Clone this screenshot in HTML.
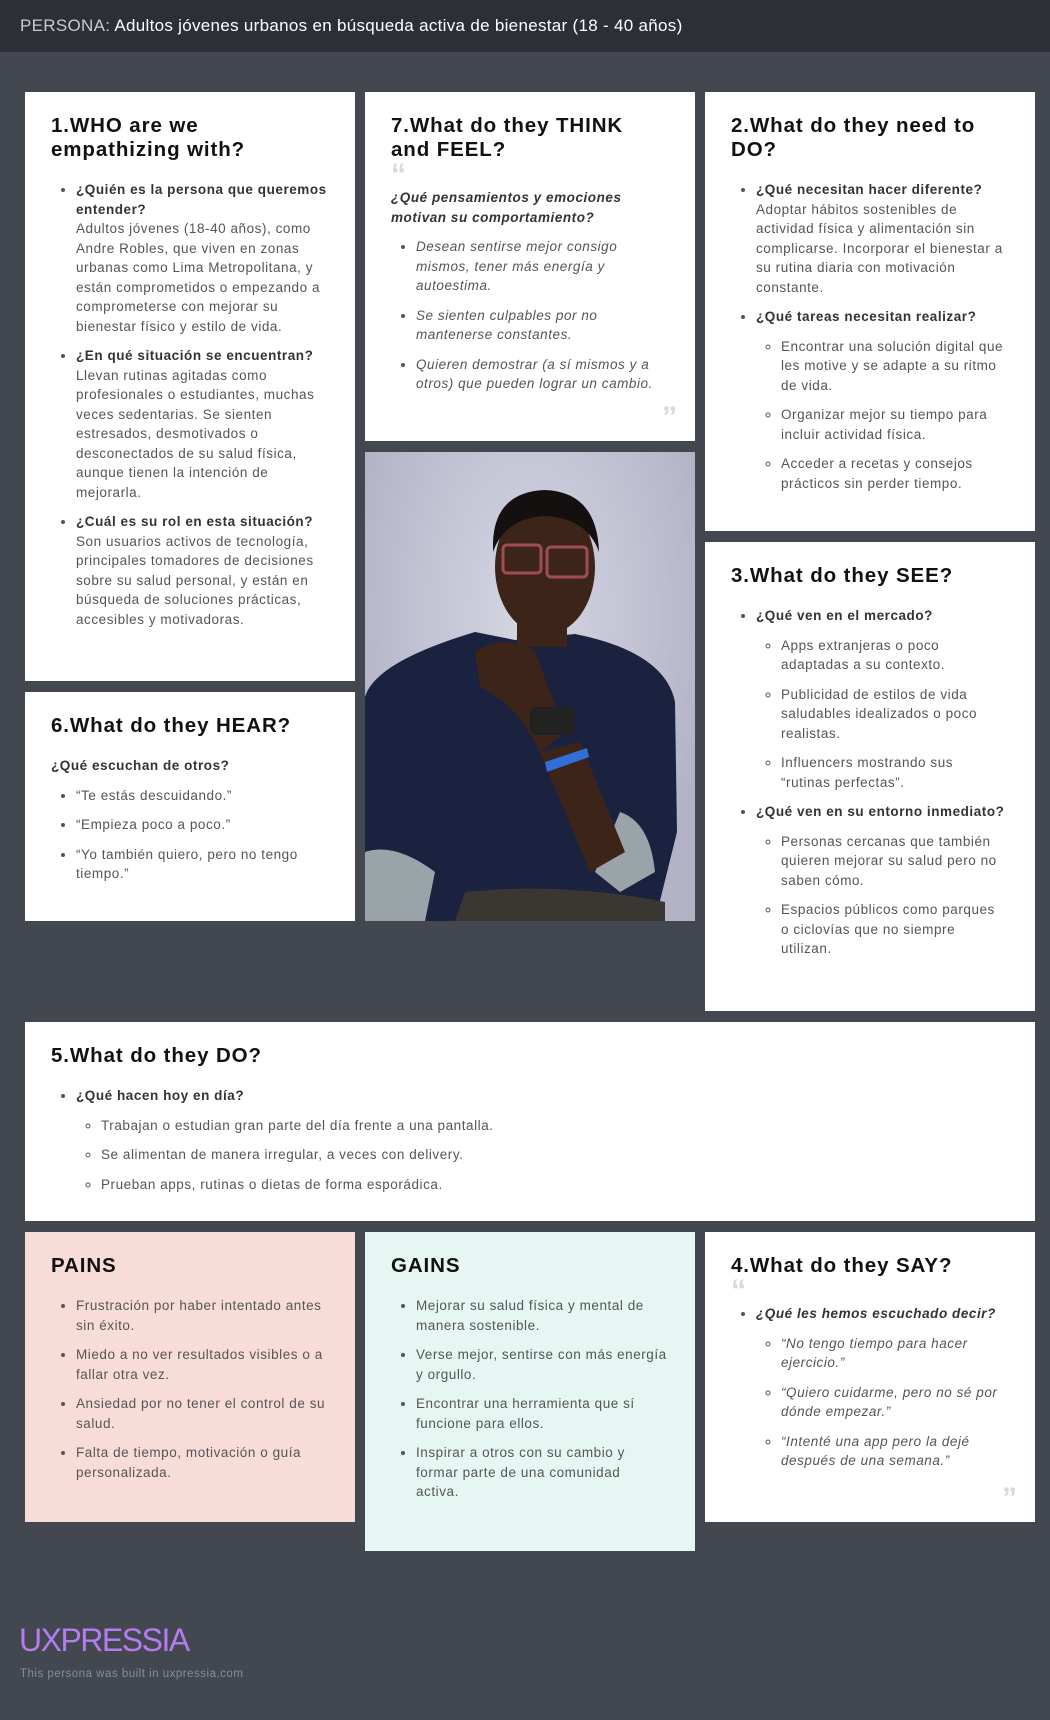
<!DOCTYPE html>
<html><head><meta charset="utf-8"><style>
*{margin:0;padding:0;box-sizing:border-box}
body{width:1050px;height:1720px;background:#434750;font-family:"Liberation Sans",sans-serif;position:relative;overflow:hidden}
.hdr{position:absolute;left:0;top:0;width:1050px;height:52px;background:#2c2f36;color:#fff;font-size:17px;padding:16px 0 0 20px;letter-spacing:.3px}
.hdr span{color:#c9cbd0}
.c{position:absolute;background:#fff;padding:22px 28px 0 26px;color:#555;font-size:13.5px;line-height:19.5px;letter-spacing:.55px}
.c h2{font-size:20.5px;line-height:24px;color:#111;font-weight:bold;letter-spacing:.9px;margin-bottom:18px}
.c ul{padding-left:25px;list-style:disc}
.c ul ul{list-style:circle;margin-top:10px}
.c li{margin-bottom:10px}
.c b{color:#333}
.q{color:#d6d8de;font-size:30px;font-weight:bold;line-height:18px;height:16px;overflow:visible;letter-spacing:-2px}
.i{font-style:italic}
.qe{position:absolute;right:20px;bottom:16px}
.pains{background:#f8dcd7}.gains{background:#e6f7f3}
.nw{white-space:nowrap}
</style></head><body>
<div class="hdr"><span>PERSONA:</span> Adultos jóvenes urbanos en búsqueda activa de bienestar (18 - 40 años)</div>

<div class="c" style="left:25px;top:92px;width:330px;height:589px;padding-right:22px">
<h2>1.WHO are we<br>empathizing with?</h2>
<ul>
<li><b>¿Quién es la persona que queremos entender?</b><br>Adultos jóvenes (18-40 años), como Andre Robles, que viven en zonas urbanas como Lima Metropolitana, y están comprometidos o empezando a comprometerse con mejorar su bienestar físico y estilo de vida.</li>
<li><b>¿En qué situación se encuentran?</b><br>Llevan rutinas agitadas como profesionales o estudiantes, muchas veces sedentarias. Se sienten estresados, desmotivados o desconectados de su salud física, aunque tienen la intención de mejorarla.</li>
<li><b>¿Cuál es su rol en esta situación?</b><br>Son usuarios activos de tecnología, principales tomadores de decisiones sobre su salud personal, y están en búsqueda de soluciones prácticas, accesibles y motivadoras.</li>
</ul></div>

<div class="c" style="left:25px;top:692px;width:330px;height:229px">
<h2>6.What do they HEAR?</h2>
<p style="margin-bottom:10px"><b>¿Qué escuchan de otros?</b></p>
<ul><li>“Te estás descuidando.”</li><li>“Empieza poco a poco.”</li><li>“Yo también quiero, pero no tengo tiempo.”</li></ul>
</div>

<div class="c" style="left:365px;top:92px;width:330px;height:349px;padding-right:22px">
<h2 style="margin-bottom:4px">7.What do they THINK<br>and FEEL?</h2>
<div class="q">“</div>
<p class="i" style="margin:6px 0 10px"><b>¿Qué pensamientos y emociones motivan su comportamiento?</b></p>
<ul class="i"><li>Desean sentirse mejor consigo mismos, tener más energía y autoestima.</li><li>Se sienten culpables por no mantenerse constantes.</li><li>Quieren demostrar (a sí mismos y a otros) que pueden lograr un cambio.</li></ul>
<div class="q qe">”</div>
</div>

<div style="position:absolute;left:365px;top:452px;width:330px;height:469px;overflow:hidden;background:radial-gradient(ellipse at 50% 35%,#d6d6e4,#b2b4c6 80%)">
<svg width="330" height="469" viewBox="0 0 330 469">
<path d="M0 245 Q10 210 110 180 L150 188 L210 182 Q300 200 310 250 L312 380 L290 469 L0 469 Z" fill="#1b2240"/>
<path d="M0 400 Q30 390 70 420 L60 469 L0 469Z" fill="#9aa3a8"/>
<path d="M255 360 Q285 370 290 420 L255 440 L230 420Z" fill="#9aa3a8"/>
<path d="M100 440 Q200 430 300 450 L300 469 L90 469Z" fill="#3a3733"/>
<ellipse cx="180" cy="115" rx="50" ry="68" fill="#3d2418"/>
<path d="M128 90 Q130 40 180 38 Q232 40 234 100 Q222 66 180 64 Q140 66 128 100Z" fill="#151010"/>
<rect x="152" y="165" width="50" height="30" fill="#3d2418"/>
<rect x="138" y="93" width="38" height="28" rx="4" fill="none" stroke="#a04a5a" stroke-width="3"/>
<rect x="182" y="95" width="40" height="30" rx="4" fill="none" stroke="#a04a5a" stroke-width="3"/>
<path d="M110 200 Q140 180 170 200 L200 280 L175 300 Q150 250 115 235Z" fill="#3d2418"/>
<path d="M175 300 L215 290 L260 400 L225 420Z" fill="#3d2418"/>
<rect x="165" y="255" width="45" height="28" rx="6" fill="#222"/>
<path d="M180 310 L222 296 L224 305 L182 320Z" fill="#2f6fd6"/>
</svg></div>

<div class="c" style="left:705px;top:92px;width:330px;height:439px">
<h2>2.What do they need to<br>DO?</h2>
<ul>
<li><b>¿Qué necesitan hacer diferente?</b><br>Adoptar hábitos sostenibles de actividad física y alimentación sin complicarse. Incorporar el bienestar a su rutina diaria con motivación constante.</li>
<li><b>¿Qué tareas necesitan realizar?</b>
<ul><li>Encontrar una solución digital que les motive y se adapte a su ritmo de vida.</li><li>Organizar mejor su tiempo para incluir actividad física.</li><li>Acceder a recetas y consejos prácticos sin perder tiempo.</li></ul></li>
</ul></div>

<div class="c" style="left:705px;top:542px;width:330px;height:469px;padding-right:32px">
<h2>3.What do they SEE?</h2>
<ul>
<li><b>¿Qué ven en el mercado?</b>
<ul><li>Apps extranjeras o poco adaptadas a su contexto.</li><li>Publicidad de estilos de vida saludables idealizados o poco realistas.</li><li>Influencers mostrando sus “rutinas perfectas”.</li></ul></li>
<li><b class="nw">¿Qué ven en su entorno inmediato?</b>
<ul><li>Personas cercanas que también quieren mejorar su salud pero no saben cómo.</li><li>Espacios públicos como parques o ciclovías que no siempre utilizan.</li></ul></li>
</ul></div>

<div class="c" style="left:25px;top:1022px;width:1010px;height:199px">
<h2>5.What do they DO?</h2>
<ul><li><b>¿Qué hacen hoy en día?</b>
<ul><li>Trabajan o estudian gran parte del día frente a una pantalla.</li><li>Se alimentan de manera irregular, a veces con delivery.</li><li>Prueban apps, rutinas o dietas de forma esporádica.</li></ul></li></ul>
</div>

<div class="c pains" style="left:25px;top:1232px;width:330px;height:290px">
<h2>PAINS</h2>
<ul><li>Frustración por haber intentado antes sin éxito.</li><li>Miedo a no ver resultados visibles o a fallar otra vez.</li><li>Ansiedad por no tener el control de su salud.</li><li>Falta de tiempo, motivación o guía personalizada.</li></ul>
</div>

<div class="c gains" style="left:365px;top:1232px;width:330px;height:319px;padding-right:20px">
<h2>GAINS</h2>
<ul><li>Mejorar su salud física y mental de<br>manera sostenible.</li><li>Verse mejor, sentirse con más energía<br>y orgullo.</li><li>Encontrar una herramienta que sí<br>funcione para ellos.</li><li>Inspirar a otros con su cambio y<br>formar parte de una comunidad<br>activa.</li></ul>
</div>

<div class="c" style="left:705px;top:1232px;width:330px;height:290px">
<h2 style="margin-bottom:4px">4.What do they SAY?</h2>
<div class="q">“</div>
<ul class="i" style="margin-top:6px"><li><b>¿Qué les hemos escuchado decir?</b>
<ul><li>“No tengo tiempo para hacer ejercicio.”</li><li>“Quiero cuidarme, pero no sé por dónde empezar.”</li><li>“Intenté una app pero la dejé después de una semana.”</li></ul></li></ul>
<div class="q qe">”</div>
</div>

<div style="position:absolute;left:19px;top:1622px;color:#b57cf0;font-size:32px;letter-spacing:-1.5px">UXPRESSIA</div>
<div style="position:absolute;left:20px;top:1668px;color:#8a8d95;font-size:11.5px;letter-spacing:.5px">This persona was built in uxpressia.com</div>
</body></html>
